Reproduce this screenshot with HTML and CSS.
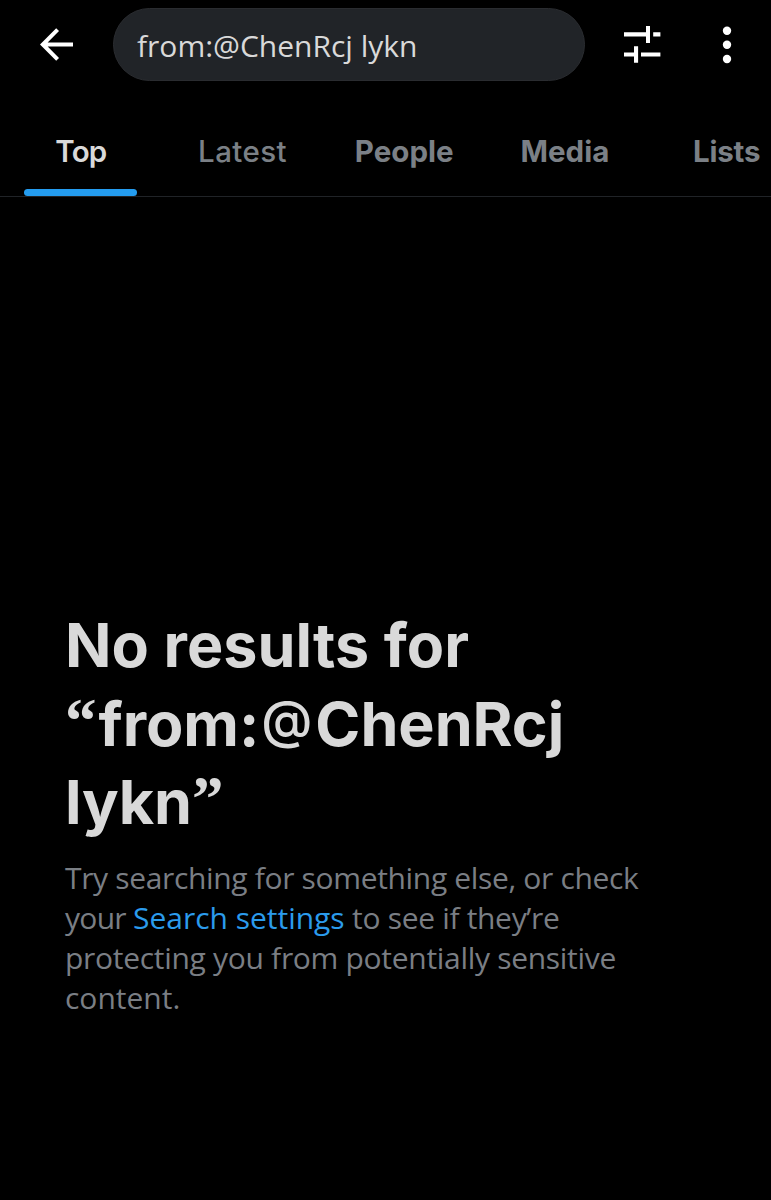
FILE: index.html
```
<!DOCTYPE html>
<html lang="en">
<head>
<meta charset="utf-8">
<title>Search</title>
<link rel="stylesheet" href="styles.css">
</head>
<body>
<header class="bar">
  <svg class="back" viewBox="0 0 34 34" width="34" height="34" fill="none" stroke="#fff" stroke-width="4"><path d="M17.6 1.7 2.8 16.5l14.8 14.8M3 16.5h30"/></svg>
  <div class="search">from:@ChenRcj lykn</div>
  <svg class="filters" viewBox="0 0 38 38" width="38" height="38" fill="#fff"><path d="M1 6.3h22V0h4v17h-4v-6.5H1zM30.2 6.3h7.2v4.2h-7.2zM1 26.5h10V20.3h4.1v16.5H11v-6.2H1zM18 26.5h19.4v4.1H18z"/></svg>
  <svg class="more" viewBox="0 0 10 38" width="10" height="38" fill="#fff"><circle cx="5" cy="4.7" r="4.2"/><circle cx="5" cy="18.8" r="4.2"/><circle cx="5" cy="33" r="4.2"/></svg>
</header>
<nav class="tabs">
  <a class="tab active">Top</a>
  <a class="tab latest">Latest</a>
  <a class="tab bold">People</a>
  <a class="tab bold media">Media</a>
  <a class="tab bold lists">Lists</a>
</nav>
<main class="empty">
  <h1 class="title"><span class="t1">No results for</span><span class="t2"><i class="quote open">“</i>from:<i class="at">@</i>ChenRcj</span><span class="t3">lykn<i class="quote">”</i></span></h1>
  <p class="note"><span class="n1">Try searching for something else, or check</span><span class="n2"><b class="your">your </b><a class="link">Search settings</a> to see if they’re</span><span class="n3">protecting you from potentially sensitive</span><span class="n4">content.</span></p>
</main>
</body>
</html>
```
FILE: styles.css
```
* { box-sizing: border-box; }
body {
  margin: 0;
  height: 1200px;
  overflow: hidden;
  background: #000;
  color: #d9d9d9;
  font-family: "Open Sans", "Noto Sans", sans-serif;
}
.bar {
  display: flex;
  align-items: center;
  height: 89px;
  padding-left: 40px;
}
.back { flex: none; margin-right: 39px; }
.search {
  flex: none;
  width: 472px;
  height: 73px;
  padding: 17px 0 0 23px;
  border: 1px solid #2a2c30;
  border-radius: 37px;
  background: #212428;
  font-size: 30px;
  line-height: 40px;
  letter-spacing: 0;
}
.filters { flex: none; margin: 0 61px 0 37.5px; }
.more { flex: none; }
.tabs {
  display: flex;
  height: 108px;
  border-bottom: 1px solid #202327;
  overflow: hidden;
}
.tab {
  flex: none;
  display: flex;
  flex-direction: column;
  align-items: center;
  justify-content: space-between;
  width: 161.7px;
  padding-top: 41.5px;
  color: #7b8086;
  font: 500 29.5px/40px "Inter", sans-serif;
}
.active { color: #d9d9d9; font-weight: 600; letter-spacing: -0.8px; }
.active::after {
  content: "";
  width: 113px;
  height: 6.6px;
  border-radius: 4px;
  background: #249cef;
}
.latest { letter-spacing: 0.4px; }
.bold { font-weight: 700; }
.media { padding-right: 2px; }
.lists { padding-right: 2px; letter-spacing: -0.2px; }
.empty { padding: 409px 0 0 65px; }
.title {
  margin: 0 0 16px;
  font: 700 61px/78.5px "Inter", sans-serif;
}
.title span, .note span { display: block; white-space: nowrap; }
.title i { font-style: normal; line-height: 0; }
.t1 { letter-spacing: 0.05px; }
.t2 { letter-spacing: -0.05px; }
.t3 { letter-spacing: -0.1px; }
.quote {
  font-family: "Liberation Serif", serif;
  font-size: 63px;
  vertical-align: 4px;
}
.open { margin-right: 2px; }
.at {
  margin: 0 3px 0 2px;
  font-size: 52px;
  font-weight: 500;
  vertical-align: 8px;
}
.note {
  margin: 0;
  color: #7a7e84;
  font-size: 30px;
  line-height: 40px;
}
.n1 { letter-spacing: -0.34px; }
.n2 { letter-spacing: -0.32px; }
.n3 { letter-spacing: -0.3px; }
.your { font-weight: 400; letter-spacing: -0.7px; }
.link { color: #2b9bec; letter-spacing: -0.02px; }
```
